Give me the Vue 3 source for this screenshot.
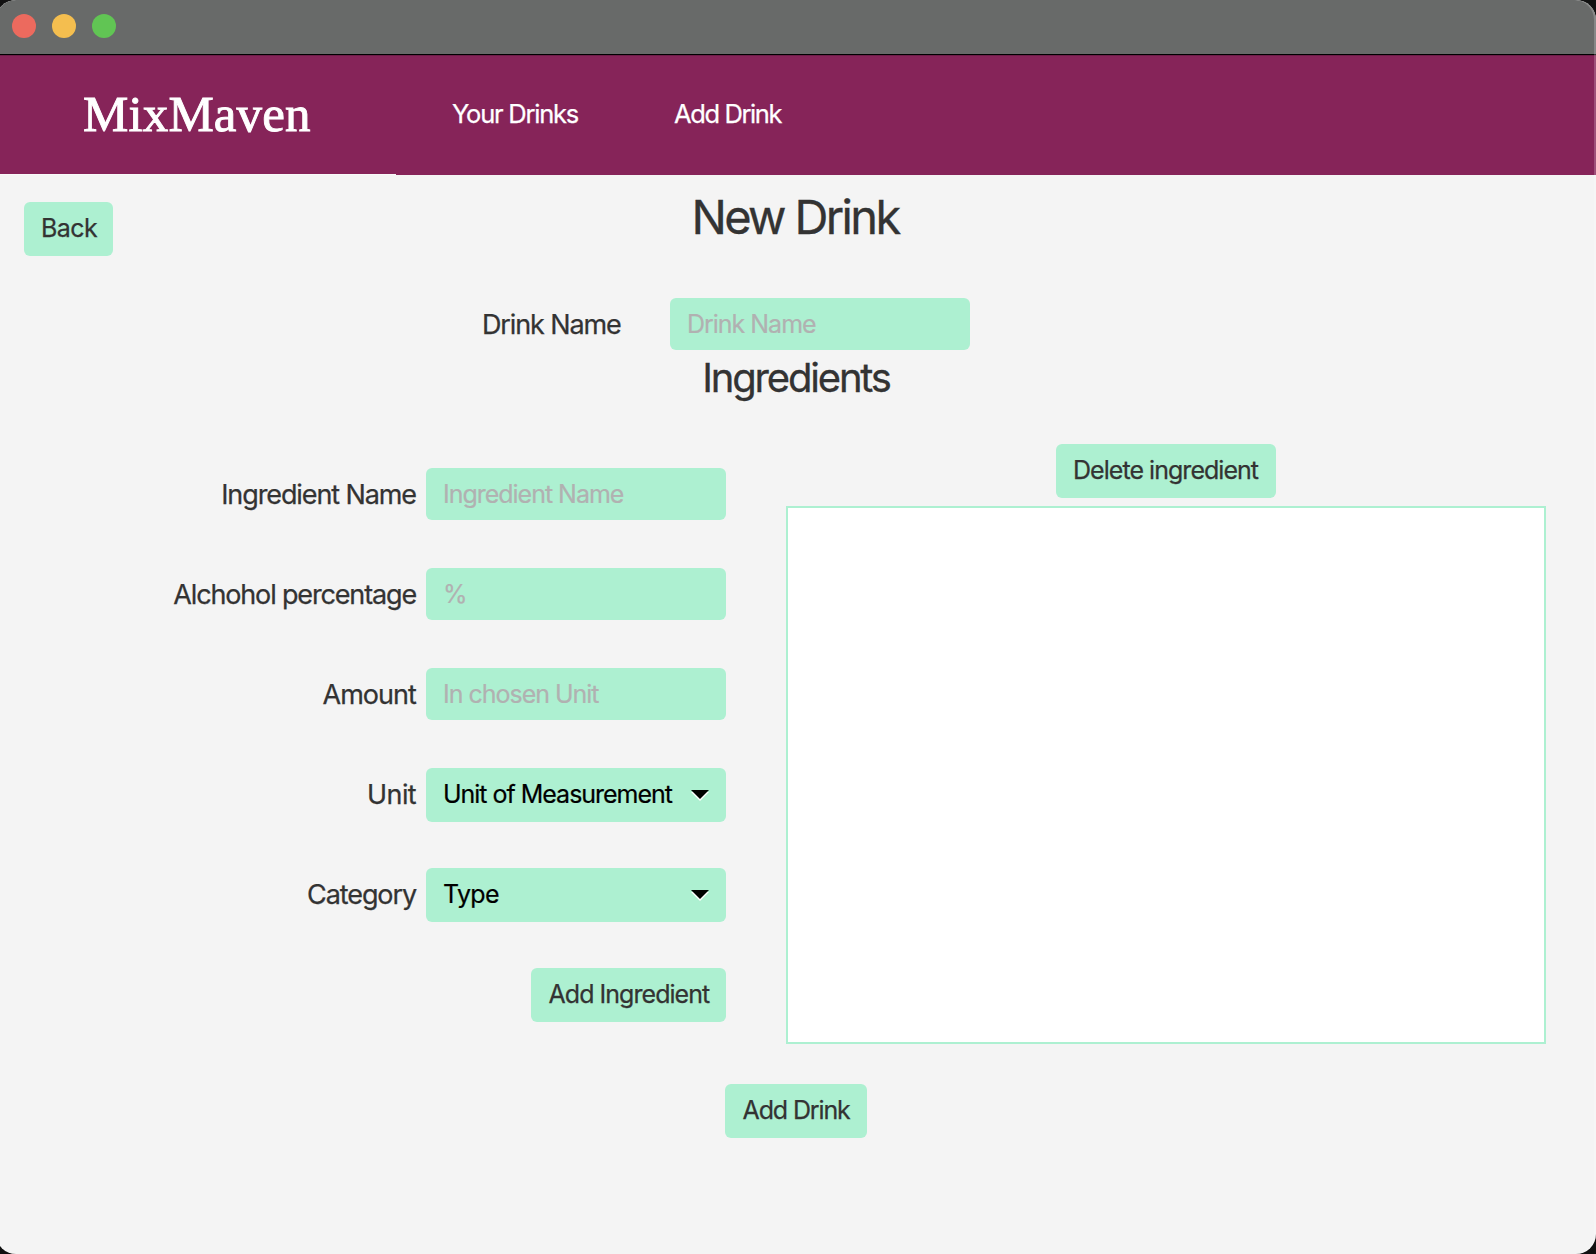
<script setup>
const fields = [
  { label: 'Ingredient Name', kind: 'input', text: 'Ingredient Name', labelClass: 'roomy' },
  { label: 'Alchohol percentage', kind: 'input', text: '%', labelClass: 'even' },
  { label: 'Amount', kind: 'input', text: 'In chosen Unit', labelClass: 'wide' },
  { label: 'Unit', kind: 'select', text: 'Unit of Measurement', labelClass: 'loose' },
  { label: 'Category', kind: 'select', text: 'Type', labelClass: 'roomy', textClass: 'short' },
]
</script>

<template>
  <div class="desktop">
    <div class="window">
      <div class="titlebar">
        <i class="dot close"></i>
        <i class="dot minimize"></i>
        <i class="dot maximize"></i>
      </div>
      <header class="header">
        <div class="brand"><span>MixMaven</span></div>
        <nav class="nav">
          <a class="nav-drinks">Your Drinks</a>
          <a class="nav-add">Add Drink</a>
        </nav>
      </header>
      <main class="page">
        <div class="top">
          <div class="button back">Back</div>
          <h1>New Drink</h1>
        </div>
        <div class="drink-name">
          <span class="label">Drink Name</span>
          <div class="field input"><span>Drink Name</span></div>
        </div>
        <h2>Ingredients</h2>
        <div class="columns">
          <div class="form">
            <div v-for="f in fields" :key="f.label" class="row">
              <span class="label" :class="f.labelClass">{{ f.label }}</span>
              <div class="field" :class="f.kind">
                <span :class="f.textClass">{{ f.text }}</span>
                <svg v-if="f.kind === 'select'" class="arrow" width="18" height="11" viewBox="0 0 18 11">
                  <path d="M0 2H18L9 11Z" fill="#fff" />
                  <path d="M0 0H18L9 9Z" fill="#000" />
                </svg>
              </div>
            </div>
            <div class="button add-ingredient">Add Ingredient</div>
          </div>
          <div class="list-side">
            <div class="button delete">Delete ingredient</div>
            <div class="list"></div>
          </div>
        </div>
        <div class="button add-drink">Add Drink</div>
      </main>
      <div class="edge"></div>
    </div>
  </div>
</template>

<style>
body {
  background: #111;
}
</style>

<style scoped>
.desktop {
  width: 1596px;
  height: 1254px;
  overflow: hidden;
  background: #111;
  font-family: Inter, 'Noto Sans', sans-serif;
  color: #333;
}
.window {
  position: relative;
  width: 1600px;
  height: 1254px;
  margin-left: -4px;
  padding-left: 4px;
  box-sizing: border-box;
  border-radius: 20px;
  background: #f4f4f4;
  overflow: hidden;
}
.titlebar {
  display: flex;
  gap: 16px;
  height: 40px;
  margin-left: -4px;
  padding: 14px 0 0 16px;
  background: #686a69;
  border-bottom: 1px solid #000;
}
.dot {
  width: 24px;
  height: 24px;
  border-radius: 50%;
}
.close { background: #ec6a5e; }
.minimize { background: #f4be4f; }
.maximize { background: #61c554; }
.header {
  display: flex;
  height: 120px;
  margin-left: -4px;
  background: #862459;
  box-shadow: inset 0 1px #6d1d48;
  color: #fff;
}
.brand {
  width: 400px;
  box-sizing: border-box;
  padding-left: 87px;
  border-bottom: 1px solid #f9f9f9;
  font: 51px/118px 'Liberation Serif', serif;
  letter-spacing: 0.12px;
  -webkit-text-stroke: 0.9px #fff;
}
.nav {
  display: flex;
  font-size: 25.5px;
  line-height: 117px;
  white-space: nowrap;
  -webkit-text-stroke: 0.25px;
}
.nav-drinks {
  width: 278px;
  padding-left: 56px;
  box-sizing: border-box;
  letter-spacing: -1.23px;
}
.nav-add {
  letter-spacing: -1.4px;
}
.page {
  display: flex;
  flex-direction: column;
  width: 1596px;
}
.top {
  display: grid;
  grid-template-columns: 1fr 400px 1fr;
  align-items: start;
  height: 123px;
}
h1, h2 {
  margin: 0;
  font-weight: 400;
  text-align: center;
  white-space: nowrap;
}
h1 {
  margin-top: 12px;
  margin-left: -6px;
  font-size: 47px;
  line-height: 60px;
  letter-spacing: -2.65px;
  -webkit-text-stroke: 0.3px;
}
h2 {
  height: 94px;
  padding-top: 3px;
  margin-left: -4px;
  box-sizing: border-box;
  font-size: 40px;
  line-height: 49px;
  letter-spacing: -2.18px;
  -webkit-text-stroke: 0.3px;
}
.button {
  height: 54px;
  box-sizing: border-box;
  border-radius: 6px;
  background: #adf0d1;
  font-size: 25px;
  line-height: 53px;
  letter-spacing: -0.96px;
  white-space: nowrap;
  -webkit-text-stroke: 0.25px;
}
.back {
  width: 89px;
  margin: 27px 0 0 24px;
  padding-left: 17px;
  letter-spacing: -0.6px;
}
.drink-name {
  display: flex;
  height: 52px;
  padding-left: 482px;
}
.drink-name .label {
  width: 188px;
  letter-spacing: -1.12px;
}
.label {
  font-size: 27px;
  line-height: 54px;
  letter-spacing: -1.2px;
  white-space: nowrap;
  -webkit-text-stroke: 0.25px;
}
.roomy { letter-spacing: -1.1px; }
.even { letter-spacing: -1.15px; }
.wide { letter-spacing: -0.95px; }
.loose { letter-spacing: -0.63px; }
.field {
  display: flex;
  justify-content: space-between;
  width: 300px;
  height: 52px;
  box-sizing: border-box;
  padding: 0 17px;
  border-radius: 6px;
  background: #adf0d1;
  font-size: 25px;
  line-height: 52px;
  letter-spacing: -1.02px;
  white-space: nowrap;
  -webkit-text-stroke: 0.2px;
}
.input { color: #b1b1b1; }
.select {
  height: 54px;
  line-height: 53px;
  color: #000;
}
.short { letter-spacing: -0.64px; }
.arrow {
  margin-top: 22px;
}
.columns {
  display: flex;
  height: 600px;
}
.form {
  display: flex;
  flex-direction: column;
  align-items: flex-end;
  gap: 46px;
  width: 726px;
  padding-top: 24px;
  box-sizing: border-box;
}
.row {
  display: flex;
  gap: 10px;
  height: 54px;
}
.add-ingredient {
  width: 195px;
  padding-left: 17.5px;
}
.list-side {
  display: flex;
  flex-direction: column;
  align-items: center;
  gap: 8px;
  width: 760px;
  margin-left: 60px;
}
.delete {
  width: 220px;
  padding-left: 17px;
}
.list {
  width: 760px;
  height: 538px;
  box-sizing: border-box;
  border: 2px solid #adf0d1;
  background: #fff;
}
.add-drink {
  width: 142px;
  margin: 40px 0 0 725px;
  padding-left: 17.5px;
  letter-spacing: -1.12px;
}
/* thin highlight along the window frame */
.edge {
  position: absolute;
  inset: 0;
  border-radius: 20px;
  box-shadow: inset -2px 0 0 rgba(255, 255, 255, 0.2);
  pointer-events: none;
}
</style>
